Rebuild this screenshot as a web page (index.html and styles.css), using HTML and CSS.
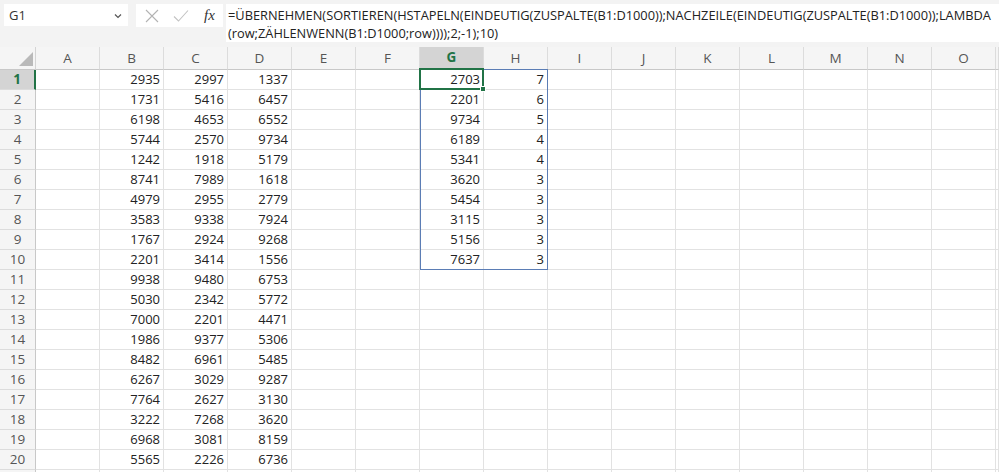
FILE: index.html
```html
<!DOCTYPE html>
<html lang="de">
<head>
<meta charset="utf-8">
<title>Excel</title>
<link rel="stylesheet" href="styles.css">
</head>
<body>
<div class="app">
  <div class="topbar">
    <div class="namebox"><span class="nb-text">G1</span><svg class="chev" width="8" height="6" viewBox="0 0 8 6"><path d="M1 1.5 L4 4.5 L7 1.5" fill="none" stroke="#555" stroke-width="1.2"/></svg></div>
    <div class="fbar">
      <div class="ficons">
        <svg class="ico" width="14" height="14" viewBox="0 0 14 14"><path d="M1 1 L13 13 M13 1 L1 13" stroke="#b3b3b3" stroke-width="1.1" fill="none"/></svg>
        <svg class="ico" width="16" height="14" viewBox="0 0 16 14"><path d="M1 7.5 L5.5 12 L15 1.5" stroke="#c3c3c3" stroke-width="1.1" fill="none"/></svg>
        <span class="fx">fx</span>
      </div>
      <div class="formula">=ÜBERNEHMEN(SORTIEREN(HSTAPELN(EINDEUTIG(ZUSPALTE(B1:D1000));NACHZEILE(EINDEUTIG(ZUSPALTE(B1:D1000));LAMBDA<br>(row;ZÄHLENWENN(B1:D1000;row))));2;-1);10)</div>
    </div>
  </div>
  <div class="grid">
    <div class="corner"><span class="tri"></span></div><div class="ch">A</div><div class="ch">B</div><div class="ch">C</div><div class="ch">D</div><div class="ch">E</div><div class="ch">F</div><div class="ch sel">G</div><div class="ch">H</div><div class="ch">I</div><div class="ch">J</div><div class="ch">K</div><div class="ch">L</div><div class="ch">M</div><div class="ch">N</div><div class="ch">O</div><div class="ch"></div>
    <div class="rh sel">1</div><div></div><div class="n">2935</div><div class="n">2997</div><div class="n">1337</div><div></div><div></div><div class="n">2703</div><div class="n">7</div><div></div><div></div><div></div><div></div><div></div><div></div><div></div><div></div>
    <div class="rh">2</div><div></div><div class="n">1731</div><div class="n">5416</div><div class="n">6457</div><div></div><div></div><div class="n">2201</div><div class="n">6</div><div></div><div></div><div></div><div></div><div></div><div></div><div></div><div></div>
    <div class="rh">3</div><div></div><div class="n">6198</div><div class="n">4653</div><div class="n">6552</div><div></div><div></div><div class="n">9734</div><div class="n">5</div><div></div><div></div><div></div><div></div><div></div><div></div><div></div><div></div>
    <div class="rh">4</div><div></div><div class="n">5744</div><div class="n">2570</div><div class="n">9734</div><div></div><div></div><div class="n">6189</div><div class="n">4</div><div></div><div></div><div></div><div></div><div></div><div></div><div></div><div></div>
    <div class="rh">5</div><div></div><div class="n">1242</div><div class="n">1918</div><div class="n">5179</div><div></div><div></div><div class="n">5341</div><div class="n">4</div><div></div><div></div><div></div><div></div><div></div><div></div><div></div><div></div>
    <div class="rh">6</div><div></div><div class="n">8741</div><div class="n">7989</div><div class="n">1618</div><div></div><div></div><div class="n">3620</div><div class="n">3</div><div></div><div></div><div></div><div></div><div></div><div></div><div></div><div></div>
    <div class="rh">7</div><div></div><div class="n">4979</div><div class="n">2955</div><div class="n">2779</div><div></div><div></div><div class="n">5454</div><div class="n">3</div><div></div><div></div><div></div><div></div><div></div><div></div><div></div><div></div>
    <div class="rh">8</div><div></div><div class="n">3583</div><div class="n">9338</div><div class="n">7924</div><div></div><div></div><div class="n">3115</div><div class="n">3</div><div></div><div></div><div></div><div></div><div></div><div></div><div></div><div></div>
    <div class="rh">9</div><div></div><div class="n">1767</div><div class="n">2924</div><div class="n">9268</div><div></div><div></div><div class="n">5156</div><div class="n">3</div><div></div><div></div><div></div><div></div><div></div><div></div><div></div><div></div>
    <div class="rh">10</div><div></div><div class="n">2201</div><div class="n">3414</div><div class="n">1556</div><div></div><div></div><div class="n">7637</div><div class="n">3</div><div></div><div></div><div></div><div></div><div></div><div></div><div></div><div></div>
    <div class="rh">11</div><div></div><div class="n">9938</div><div class="n">9480</div><div class="n">6753</div><div></div><div></div><div></div><div></div><div></div><div></div><div></div><div></div><div></div><div></div><div></div><div></div>
    <div class="rh">12</div><div></div><div class="n">5030</div><div class="n">2342</div><div class="n">5772</div><div></div><div></div><div></div><div></div><div></div><div></div><div></div><div></div><div></div><div></div><div></div><div></div>
    <div class="rh">13</div><div></div><div class="n">7000</div><div class="n">2201</div><div class="n">4471</div><div></div><div></div><div></div><div></div><div></div><div></div><div></div><div></div><div></div><div></div><div></div><div></div>
    <div class="rh">14</div><div></div><div class="n">1986</div><div class="n">9377</div><div class="n">5306</div><div></div><div></div><div></div><div></div><div></div><div></div><div></div><div></div><div></div><div></div><div></div><div></div>
    <div class="rh">15</div><div></div><div class="n">8482</div><div class="n">6961</div><div class="n">5485</div><div></div><div></div><div></div><div></div><div></div><div></div><div></div><div></div><div></div><div></div><div></div><div></div>
    <div class="rh">16</div><div></div><div class="n">6267</div><div class="n">3029</div><div class="n">9287</div><div></div><div></div><div></div><div></div><div></div><div></div><div></div><div></div><div></div><div></div><div></div><div></div>
    <div class="rh">17</div><div></div><div class="n">7764</div><div class="n">2627</div><div class="n">3130</div><div></div><div></div><div></div><div></div><div></div><div></div><div></div><div></div><div></div><div></div><div></div><div></div>
    <div class="rh">18</div><div></div><div class="n">3222</div><div class="n">7268</div><div class="n">3620</div><div></div><div></div><div></div><div></div><div></div><div></div><div></div><div></div><div></div><div></div><div></div><div></div>
    <div class="rh">19</div><div></div><div class="n">6968</div><div class="n">3081</div><div class="n">8159</div><div></div><div></div><div></div><div></div><div></div><div></div><div></div><div></div><div></div><div></div><div></div><div></div>
    <div class="rh">20</div><div></div><div class="n">5565</div><div class="n">2226</div><div class="n">6736</div><div></div><div></div><div></div><div></div><div></div><div></div><div></div><div></div><div></div><div></div><div></div><div></div>
    <div class="rh"></div><div></div><div></div><div></div><div></div><div></div><div></div><div></div><div></div><div></div><div></div><div></div><div></div><div></div><div></div><div></div><div></div>
    <div class="spill"></div>
    <div class="active"><span class="handle"></span></div>
  </div>
</div>
</body>
</html>
```

FILE: styles.css
```css
* { box-sizing: border-box; }
html, body { margin: 0; padding: 0; }
body {
  width: 999px;
  height: 472px;
  overflow: hidden;
  background: #fff;
  font-family: "Open Sans", "Noto Sans", sans-serif;
  color: #222;
}
.app { display: flex; flex-direction: column; height: 100%; }

.topbar {
  display: flex;
  align-items: flex-start;
  gap: 8px;
  height: 47px;
  padding: 4px 0 0 4px;
  background: #f3f3f3;
  flex: none;
}
.namebox {
  width: 124px;
  height: 22px;
  background: #fff;
  display: flex;
  align-items: center;
  justify-content: space-between;
  padding: 0 6px 0 5px;
}
.nb-text { font-size: 13px; color: #333; }
.chev { margin-top: 1px; }
.fbar { flex: 1; display: flex; align-items: flex-start; gap: 3px; }
.ficons {
  width: 87px;
  height: 23px;
  background: #fff;
  display: flex;
  align-items: center;
  padding-left: 9px;
  gap: 14px;
}
.fx {
  font-family: "Liberation Serif", "DejaVu Serif", serif;
  font-style: italic;
  font-size: 15px;
  color: #333;
  margin-left: 1px;
}
.formula {
  flex: 1;
  height: 38px;
  background: #fff;
  padding: 2px 0 0 2px;
  font-size: 12.8px;
  line-height: 18px;
  white-space: nowrap;
  color: #222;
  overflow: hidden;
}

.grid {
  position: relative;
  display: grid;
  grid-template-columns: 36px repeat(15, 64px) 1fr;
  grid-template-rows: 23px;
  grid-auto-rows: 20px;
  font-size: 13px;
}
.grid > div {
  border-right: 1px solid #e2e2e2;
  border-bottom: 1px solid #e2e2e2;
}
.grid > .corner {
  position: relative;
  background: #f5f5f5;
  border-bottom: 1px solid #c8c8c8;
  border-right: 1px solid #d4d4d4;
}
.tri {
  position: absolute;
  right: 2px;
  bottom: 3px;
  width: 0;
  height: 0;
  border-left: 14px solid transparent;
  border-bottom: 14px solid #b9b9b9;
}
.grid > .ch {
  background: #f5f5f5;
  color: #555;
  text-align: center;
  line-height: 22px;
  font-size: 13.5px;
  border-bottom: 1px solid #c8c8c8;
  border-right: 1px solid #dcdcdc;
}
.grid > .ch.sel {
  background: #d4d4d4;
  color: #217346;
  font-weight: 700;
  border-bottom: 2px solid #217346;
  line-height: 21px;
}
.grid > .rh {
  background: #f5f5f5;
  color: #555;
  text-align: center;
  line-height: 19px;
  font-size: 13.5px;
  border-right: 1px solid #c8c8c8;
  border-bottom: 1px solid #dcdcdc;
}
.grid > .rh.sel {
  background: #d4d4d4;
  color: #217346;
  font-weight: 700;
  border-right: 2px solid #217346;
}
.grid > .n {
  text-align: right;
  padding-right: 3px;
  line-height: 19px;
  color: #222;
}

.spill {
  position: absolute;
  grid-column: 8 / 10;
  grid-row: 2 / 12;
  inset: -1px 0 0 0;
  pointer-events: none;
}
.grid > .spill { border: 1px solid #5b7db5; }
.active {
  position: absolute;
  grid-column: 8 / 9;
  grid-row: 2 / 3;
  inset: -2px 0 0 -1px;
  pointer-events: none;
}
.grid > .active { border: 2px solid #217346; }
.handle {
  position: absolute;
  right: -4px;
  bottom: -4px;
  width: 6px;
  height: 6px;
  background: #217346;
  border: 1px solid #fff;
}
```
